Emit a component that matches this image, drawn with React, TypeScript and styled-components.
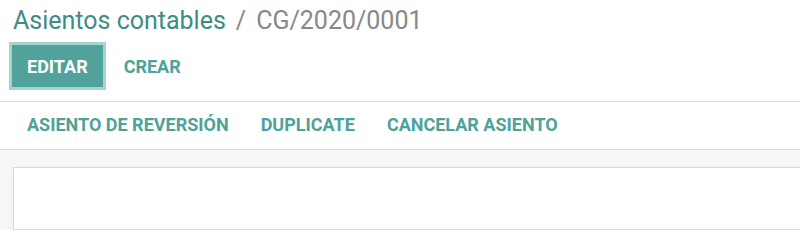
import React from 'react'
import styled, { createGlobalStyle } from 'styled-components'

const GlobalStyle = createGlobalStyle`
    body {
        margin: 0;
        background: #ffffff;
        font-family: Roboto, "Liberation Sans", sans-serif;
    }
`

const Page = styled.div`
    width: 800px;
    height: 230px;
    overflow: hidden;
    display: flex;
    flex-direction: column;
`
const ControlPanel = styled.div`
    padding: 6px 13px 11px 9px;
    border-bottom: 1px solid #d9dcdf;
`
const Breadcrumb = styled.div`
    display: flex;
    align-items: baseline;
    gap: 10px;
    padding-left: 4px;
    font-size: 25px;
    line-height: 30px;
    color: #888888;
`
const Crumb = styled.span`
    color: #3f8c85;
`
const Buttons = styled.div`
    display: flex;
    align-items: center;
    margin-top: 6px;
`
const Button = styled.button<{ $primary?: boolean }>`
    height: 48px;
    padding: 0 15px;
    font-family: inherit;
    font-size: 18px;
    font-weight: 700;
    cursor: pointer;
    border: 3px solid ${p => (p.$primary ? '#a7d3ce' : 'transparent')};
    background: ${p => (p.$primary ? '#51a29a' : 'transparent')};
    color: ${p => (p.$primary ? '#ffffff' : '#4ea29a')};
`
const ActionBar = styled.div`
    display: flex;
    align-items: center;
    height: 47px;
    padding-left: 11px;
    border-bottom: 1px solid #d9dcdf;
`
const Action = styled.button`
    padding: 0 16px 2px;
    height: 100%;
    border: 0;
    background: transparent;
    font-family: inherit;
    font-size: 18px;
    font-weight: 700;
    color: #4ea29a;
    cursor: pointer;
`
const SheetArea = styled.div`
    flex: 1;
    background: #f7f7f7;
    padding: 17px 0 0 13px;
    overflow: hidden;
`
const Sheet = styled.div`
    height: 61px;
    margin-right: -20px;
    background: #ffffff;
    border: 1px solid #d8dadd;
    box-shadow: 0 2px 6px rgba(0, 0, 0, 0.05);
`

export default function App() {
    return (
        <Page>
            <GlobalStyle />
            <ControlPanel>
                <Breadcrumb>
                    <Crumb>Asientos contables</Crumb>
                    <span>/</span>
                    <span>CG/2020/0001</span>
                </Breadcrumb>
                <Buttons>
                    <Button $primary>EDITAR</Button>
                    <Button>CREAR</Button>
                </Buttons>
            </ControlPanel>
            <ActionBar>
                <Action>ASIENTO DE REVERSIÓN</Action>
                <Action>DUPLICATE</Action>
                <Action>CANCELAR ASIENTO</Action>
            </ActionBar>
            <SheetArea>
                <Sheet />
            </SheetArea>
        </Page>
    )
}
